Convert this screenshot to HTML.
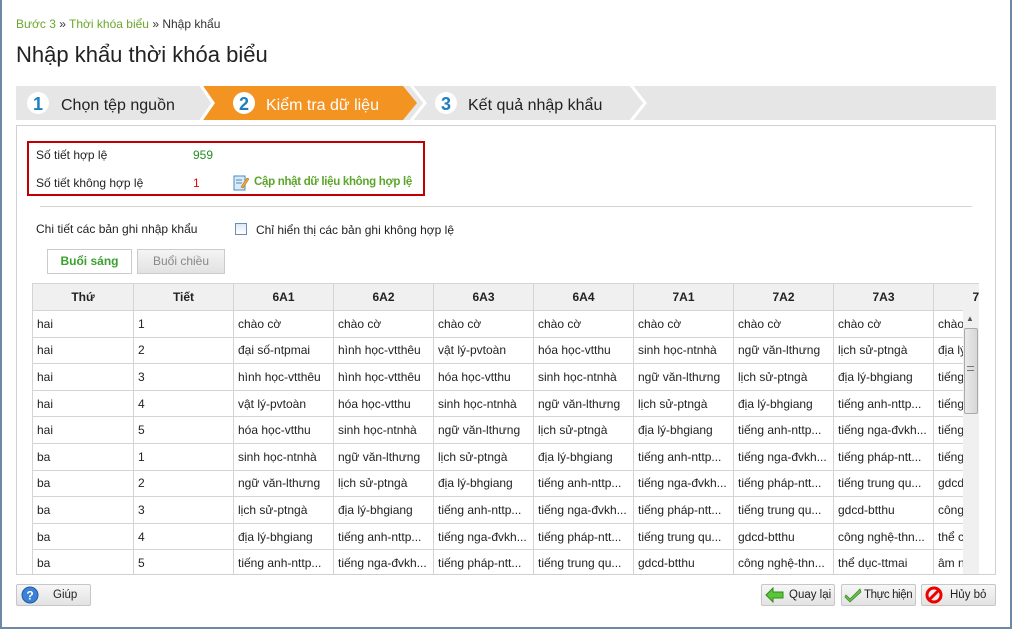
<!DOCTYPE html>
<html><head><meta charset="utf-8"><style>
*{box-sizing:border-box;margin:0;padding:0}
body{width:1012px;height:629px;background:#fff;font-family:"Liberation Sans",sans-serif;font-size:12px;color:#222;position:relative;overflow:hidden}
.frame{position:absolute;left:0;top:0;width:1012px;height:629px;border:2px solid #6d8aa5;border-top:none}
.abs{position:absolute;white-space:nowrap}
table{border-collapse:collapse;table-layout:fixed}
td,th{border:1px solid #d4d4d4;height:26.6px;padding:0 4px;overflow:hidden;white-space:nowrap;font-size:12px;text-align:left;font-weight:normal}
th{background:#f0f0f0;font-weight:bold;text-align:center;height:27px}
.btn{position:absolute;height:22px;border:1px solid #c6c6c6;border-radius:2px;background:linear-gradient(#f7f7f7,#e3e3e3);font-size:11.5px;display:flex;align-items:center;white-space:nowrap;overflow:hidden}
</style></head><body>
<div class="frame"></div>
<div class="abs" style="left:16px;top:17px;font-size:12px;color:#6aa72b">Bước 3 <span style="color:#333">»</span> Thời khóa biểu <span style="color:#333">» Nhập khẩu</span></div>
<div class="abs" style="left:16px;top:42px;font-size:22px;color:#222">Nhập khẩu thời khóa biểu</div>
<svg class="abs" style="left:0;top:0" width="1012" height="130">
<rect x="16" y="86" width="980" height="34" fill="#e6e6e6"/>
<polygon points="203,86 403,86 417,103 403,120 203,120 215,103" fill="#f39422"/>
<polyline points="410,84 425,103 410,122" fill="none" stroke="#fff" stroke-width="3"/>
<polyline points="630,84 645,103 630,122" fill="none" stroke="#fff" stroke-width="3"/>
<polyline points="200,84 213,103 200,122" fill="none" stroke="#fff" stroke-width="3"/>
<circle cx="38" cy="103" r="11" fill="#fff"/><text x="38" y="110" font-size="18" font-weight="bold" fill="#1e7fbf" text-anchor="middle" font-family="Liberation Sans">1</text>
<circle cx="244" cy="103" r="11" fill="#fff"/><text x="244" y="110" font-size="18" font-weight="bold" fill="#1e7fbf" text-anchor="middle" font-family="Liberation Sans">2</text>
<circle cx="446" cy="103" r="11" fill="#fff"/><text x="446" y="110" font-size="18" font-weight="bold" fill="#1e7fbf" text-anchor="middle" font-family="Liberation Sans">3</text>
<text x="61" y="110" font-size="16" fill="#222" font-family="Liberation Sans">Chọn tệp nguồn</text>
<text x="266" y="110" font-size="16" fill="#fff" font-family="Liberation Sans">Kiểm tra dữ liệu</text>
<text x="468" y="110" font-size="16" fill="#222" font-family="Liberation Sans">Kết quả nhập khẩu</text>
</svg>
<div class="abs" style="left:16px;top:125px;width:980px;height:450px;border:1px solid #d0d0d0;border-bottom:none"></div>
<div class="abs" style="left:27px;top:141px;width:398px;height:55px;border:2px solid #c00000"></div>
<div class="abs" style="left:36px;top:148px">Số tiết hợp lệ</div>
<div class="abs" style="left:193px;top:148px;color:#2a8a2a">959</div>
<div class="abs" style="left:36px;top:176px">Số tiết không hợp lệ</div>
<div class="abs" style="left:193px;top:176px;color:#e00">1</div>
<svg class="abs" style="left:233px;top:174px" width="16" height="17"><rect x="1" y="2" width="11" height="14" fill="#dbeaf7" stroke="#4a8ac4"/><line x1="3" y1="6" x2="9" y2="6" stroke="#4a8ac4"/><line x1="3" y1="9" x2="9" y2="9" stroke="#4a8ac4"/><path d="M8 13 L14 4 L16 5 L10 14 Z" fill="#f0b030" stroke="#a67010" stroke-width=".6"/></svg>
<div class="abs" style="left:254px;top:176px;color:#5ba62a;font-weight:bold;font-size:11.5px;letter-spacing:-0.3px">Cập nhật dữ liệu không hợp lệ</div>
<div class="abs" style="left:40px;top:206px;width:932px;height:1px;background:#d4d4d4"></div>
<div class="abs" style="left:36px;top:222px">Chi tiết các bản ghi nhập khẩu</div>
<div class="abs" style="left:235px;top:223px;width:12px;height:12px;border:1px solid #6b8db5;background:linear-gradient(#dfe9f5,#fff)"></div>
<div class="abs" style="left:256px;top:223px">Chỉ hiển thị các bản ghi không hợp lệ</div>
<div class="abs" style="left:47px;top:249px;width:85px;height:25px;border:1px solid #ccc;background:#fff;color:#3aa030;font-weight:bold;text-align:center;line-height:23px">Buổi sáng</div>
<div class="abs" style="left:137px;top:249px;width:88px;height:25px;border:1px solid #ccc;background:linear-gradient(#f4f4f4,#e2e2e2);color:#888;text-align:center;line-height:23px">Buổi chiều</div>
<div class="abs" style="left:32px;top:283px;width:947px;height:292px;overflow:hidden;border-left:1px solid #d4d4d4">
<table style="width:1000px;margin-left:-1px">
<colgroup><col style="width:101px"><col style="width:100px"><col style="width:100px"><col style="width:100px"><col style="width:100px"><col style="width:100px"><col style="width:100px"><col style="width:100px"><col style="width:100px"><col style="width:100px"></colgroup>
<tr><th>Thứ</th><th>Tiết</th><th>6A1</th><th>6A2</th><th>6A3</th><th>6A4</th><th>7A1</th><th>7A2</th><th>7A3</th><th>7A4</th></tr>
<tr><td>hai</td><td>1</td><td>chào cờ</td><td>chào cờ</td><td>chào cờ</td><td>chào cờ</td><td>chào cờ</td><td>chào cờ</td><td>chào cờ</td><td>chào cờ</td></tr>
<tr><td>hai</td><td>2</td><td>đại số-ntpmai</td><td>hình học-vtthêu</td><td>vật lý-pvtoàn</td><td>hóa học-vtthu</td><td>sinh học-ntnhà</td><td>ngữ văn-lthưng</td><td>lịch sử-ptngà</td><td>địa lý</td></tr>
<tr><td>hai</td><td>3</td><td>hình học-vtthêu</td><td>hình học-vtthêu</td><td>hóa học-vtthu</td><td>sinh học-ntnhà</td><td>ngữ văn-lthưng</td><td>lịch sử-ptngà</td><td>địa lý-bhgiang</td><td>tiếng</td></tr>
<tr><td>hai</td><td>4</td><td>vật lý-pvtoàn</td><td>hóa học-vtthu</td><td>sinh học-ntnhà</td><td>ngữ văn-lthưng</td><td>lịch sử-ptngà</td><td>địa lý-bhgiang</td><td>tiếng anh-nttp...</td><td>tiếng</td></tr>
<tr><td>hai</td><td>5</td><td>hóa học-vtthu</td><td>sinh học-ntnhà</td><td>ngữ văn-lthưng</td><td>lịch sử-ptngà</td><td>địa lý-bhgiang</td><td>tiếng anh-nttp...</td><td>tiếng nga-đvkh...</td><td>tiếng</td></tr>
<tr><td>ba</td><td>1</td><td>sinh học-ntnhà</td><td>ngữ văn-lthưng</td><td>lịch sử-ptngà</td><td>địa lý-bhgiang</td><td>tiếng anh-nttp...</td><td>tiếng nga-đvkh...</td><td>tiếng pháp-ntt...</td><td>tiếng</td></tr>
<tr><td>ba</td><td>2</td><td>ngữ văn-lthưng</td><td>lịch sử-ptngà</td><td>địa lý-bhgiang</td><td>tiếng anh-nttp...</td><td>tiếng nga-đvkh...</td><td>tiếng pháp-ntt...</td><td>tiếng trung qu...</td><td>gdcd</td></tr>
<tr><td>ba</td><td>3</td><td>lịch sử-ptngà</td><td>địa lý-bhgiang</td><td>tiếng anh-nttp...</td><td>tiếng nga-đvkh...</td><td>tiếng pháp-ntt...</td><td>tiếng trung qu...</td><td>gdcd-btthu</td><td>công</td></tr>
<tr><td>ba</td><td>4</td><td>địa lý-bhgiang</td><td>tiếng anh-nttp...</td><td>tiếng nga-đvkh...</td><td>tiếng pháp-ntt...</td><td>tiếng trung qu...</td><td>gdcd-btthu</td><td>công nghệ-thn...</td><td>thể c</td></tr>
<tr><td>ba</td><td>5</td><td>tiếng anh-nttp...</td><td>tiếng nga-đvkh...</td><td>tiếng pháp-ntt...</td><td>tiếng trung qu...</td><td>gdcd-btthu</td><td>công nghệ-thn...</td><td>thể dục-ttmai</td><td>âm n</td></tr>
</table>
</div>
<div class="abs" style="left:963px;top:310px;width:16px;height:265px;background:#f0f0f0"></div>
<div class="abs" style="left:966px;top:314px;font-size:8px;color:#555">▲</div>
<div class="abs" style="left:964px;top:328px;width:14px;height:86px;border:1px solid #aaa;border-radius:2px;background:linear-gradient(90deg,#eaeaea,#d6d6d6)"></div>
<div class="abs" style="left:967px;top:366px;width:7px;height:5px;border-top:1px solid #777;border-bottom:1px solid #777"></div>
<div class="abs" style="left:16px;top:574px;width:980px;height:1px;background:#d0d0d0"></div>
<div class="btn" style="left:16px;top:584px;width:75px"><svg width="18" height="18" style="margin:0 6px 0 4px;flex:none"><circle cx="9" cy="9" r="8" fill="#3b82d6" stroke="#1f5ca8"/><text x="9" y="13.5" font-size="12" font-weight="bold" fill="#fff" text-anchor="middle" font-family="Liberation Sans">?</text></svg><span style="margin-left:8px">Giúp</span></div>
<div class="btn" style="left:761px;top:584px;width:74px"><svg width="20" height="16" style="margin:0 4px 0 3px;flex:none"><path d="M1 8 L8 1 L8 5 L18 5 L18 11 L8 11 L8 15 Z" fill="#5cc43a" stroke="#2f8a1a"/></svg>Quay lại</div>
<div class="btn" style="left:841px;top:584px;width:75px"><svg width="18" height="16" style="margin:0 2px 0 2px;flex:none"><path d="M2 8 L6 12 L16 2 L17 5 L6 15 L1 10 Z" fill="#6cc04a" stroke="#3a8a2a" stroke-width=".8"/></svg><span style="letter-spacing:-0.4px">Thực hiện</span></div>
<div class="btn" style="left:921px;top:584px;width:75px"><svg width="18" height="18" style="margin:0 7px 0 3px;flex:none"><circle cx="9" cy="9" r="7" fill="none" stroke="#e00" stroke-width="3"/><line x1="4" y1="14" x2="14" y2="4" stroke="#e00" stroke-width="3"/></svg>Hủy bỏ</div>
</body></html>
